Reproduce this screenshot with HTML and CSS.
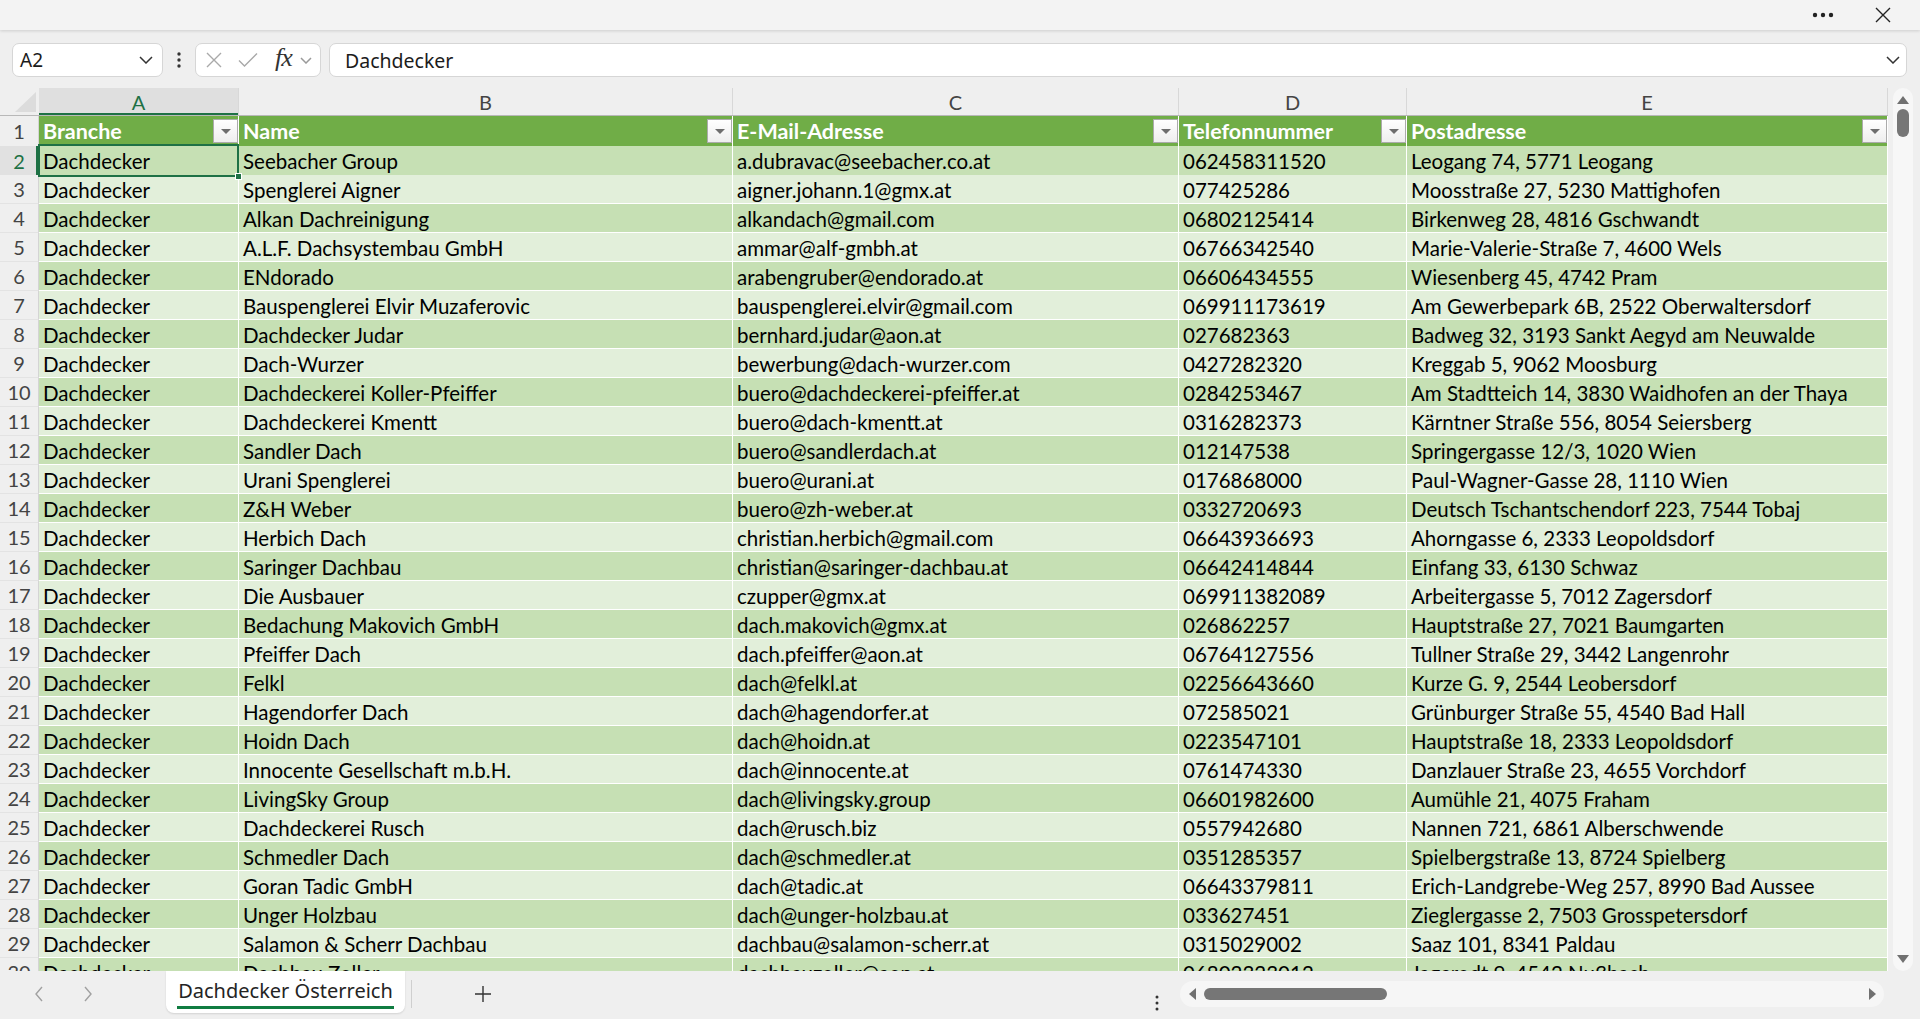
FILE: index.html
```html
<!DOCTYPE html>
<html lang="de">
<head>
  <meta charset="UTF-8">
  <title>Dachdecker Österreich</title>
  <link rel="stylesheet" href="styles.css">
</head>
<body>
  <div class="titlebar">
    <svg class="more" width="22" height="6" viewBox="0 0 22 6">
      <circle cx="3" cy="3" r="2.2"/><circle cx="11" cy="3" r="2.2"/><circle cx="19" cy="3" r="2.2"/>
    </svg>
    <svg class="close" width="16" height="16" viewBox="0 0 16 16">
      <path d="M1 1L15 15M15 1L1 15"/>
    </svg>
  </div>

  <div class="formula-row">
    <div class="namebox">
      <span>A2</span>
      <svg class="chev" width="14" height="8" viewBox="0 0 14 8"><path d="M1 1l6 6 6-6"/></svg>
    </div>
    <svg class="kebab" width="4" height="16" viewBox="0 0 4 16">
      <circle cx="2" cy="2" r="1.7"/><circle cx="2" cy="8" r="1.7"/><circle cx="2" cy="14" r="1.7"/>
    </svg>
    <div class="fx-tools">
      <svg class="tool cancel" width="16" height="16" viewBox="0 0 16 16"><path d="M1 1L15 15M15 1L1 15"/></svg>
      <svg class="tool enter" width="20" height="16" viewBox="0 0 20 16"><path d="M1 8.5l5.5 5.5L19 1.5"/></svg>
      <span class="fx">fx</span>
      <svg class="chev light" width="12" height="7" viewBox="0 0 12 7"><path d="M1 1l5 5 5-5"/></svg>
    </div>
    <div class="formula">
      <span>Dachdecker</span>
      <svg class="chev" width="14" height="8" viewBox="0 0 14 8"><path d="M1 1l6 6 6-6"/></svg>
    </div>
  </div>

  <div class="sheet">
    <div class="grid" id="grid">
      <div class="row col-heads">
        <div class="corner"><span></span></div>
        <div class="col-head current">A</div>
        <div class="col-head">B</div>
        <div class="col-head">C</div>
        <div class="col-head">D</div>
        <div class="col-head">E</div>
      </div>
      <div class="row table-head">
        <div class="row-num">1</div>
        <div class="cell th">Branche<span class="filter"></span></div>
        <div class="cell th">Name<span class="filter"></span></div>
        <div class="cell th">E-Mail-Adresse<span class="filter"></span></div>
        <div class="cell th">Telefonnummer<span class="filter"></span></div>
        <div class="cell th">Postadresse<span class="filter"></span></div>
      </div>
      <!-- data rows are added by the script below -->
    </div>

    <div class="vscroll">
      <span class="arrow up"></span>
      <span class="vthumb"></span>
      <span class="arrow down"></span>
    </div>
  </div>

  <div class="tabbar">
    <div class="tab-nav">
      <svg width="10" height="16" viewBox="0 0 10 16"><path d="M8 1L2 8l6 7"/></svg>
      <svg width="10" height="16" viewBox="0 0 10 16"><path d="M2 1l6 7-6 7"/></svg>
    </div>
    <div class="tab"><span>Dachdecker Österreich</span></div>
    <div class="tab-sep"></div>
    <svg class="add" width="18" height="18" viewBox="0 0 18 18"><path d="M9 1v16M1 9h16"/></svg>
    <svg class="kebab tabs-kebab" width="4" height="16" viewBox="0 0 4 16">
      <circle cx="2" cy="2" r="1.5"/><circle cx="2" cy="8" r="1.5"/><circle cx="2" cy="14" r="1.5"/>
    </svg>
    <div class="hscroll">
      <span class="arrow left"></span>
      <span class="hthumb"></span>
      <span class="arrow right"></span>
    </div>
  </div>

  <script>
    const rows = [
      ["Seebacher Group", "a.dubravac@seebacher.co.at", "062458311520", "Leogang 74, 5771 Leogang"],
      ["Spenglerei Aigner", "aigner.johann.1@gmx.at", "077425286", "Moosstraße 27, 5230 Mattighofen"],
      ["Alkan Dachreinigung", "alkandach@gmail.com", "06802125414", "Birkenweg 28, 4816 Gschwandt"],
      ["A.L.F. Dachsystembau GmbH", "ammar@alf-gmbh.at", "06766342540", "Marie-Valerie-Straße 7, 4600 Wels"],
      ["ENdorado", "arabengruber@endorado.at", "06606434555", "Wiesenberg 45, 4742 Pram"],
      ["Bauspenglerei Elvir Muzaferovic", "bauspenglerei.elvir@gmail.com", "069911173619", "Am Gewerbepark 6B, 2522 Oberwaltersdorf"],
      ["Dachdecker Judar", "bernhard.judar@aon.at", "027682363", "Badweg 32, 3193 Sankt Aegyd am Neuwalde"],
      ["Dach-Wurzer", "bewerbung@dach-wurzer.com", "0427282320", "Kreggab 5, 9062 Moosburg"],
      ["Dachdeckerei Koller-Pfeiffer", "buero@dachdeckerei-pfeiffer.at", "0284253467", "Am Stadtteich 14, 3830 Waidhofen an der Thaya"],
      ["Dachdeckerei Kmentt", "buero@dach-kmentt.at", "0316282373", "Kärntner Straße 556, 8054 Seiersberg"],
      ["Sandler Dach", "buero@sandlerdach.at", "012147538", "Springergasse 12/3, 1020 Wien"],
      ["Urani Spenglerei", "buero@urani.at", "0176868000", "Paul-Wagner-Gasse 28, 1110 Wien"],
      ["Z&H Weber", "buero@zh-weber.at", "0332720693", "Deutsch Tschantschendorf 223, 7544 Tobaj"],
      ["Herbich Dach", "christian.herbich@gmail.com", "06643936693", "Ahorngasse 6, 2333 Leopoldsdorf"],
      ["Saringer Dachbau", "christian@saringer-dachbau.at", "06642414844", "Einfang 33, 6130 Schwaz"],
      ["Die Ausbauer", "czupper@gmx.at", "069911382089", "Arbeitergasse 5, 7012 Zagersdorf"],
      ["Bedachung Makovich GmbH", "dach.makovich@gmx.at", "026862257", "Hauptstraße 27, 7021 Baumgarten"],
      ["Pfeiffer Dach", "dach.pfeiffer@aon.at", "06764127556", "Tullner Straße 29, 3442 Langenrohr"],
      ["Felkl", "dach@felkl.at", "02256643660", "Kurze G. 9, 2544 Leobersdorf"],
      ["Hagendorfer Dach", "dach@hagendorfer.at", "072585021", "Grünburger Straße 55, 4540 Bad Hall"],
      ["Hoidn Dach", "dach@hoidn.at", "0223547101", "Hauptstraße 18, 2333 Leopoldsdorf"],
      ["Innocente Gesellschaft m.b.H.", "dach@innocente.at", "0761474330", "Danzlauer Straße 23, 4655 Vorchdorf"],
      ["LivingSky Group", "dach@livingsky.group", "06601982600", "Aumühle 21, 4075 Fraham"],
      ["Dachdeckerei Rusch", "dach@rusch.biz", "0557942680", "Nannen 721, 6861 Alberschwende"],
      ["Schmedler Dach", "dach@schmedler.at", "0351285357", "Spielbergstraße 13, 8724 Spielberg"],
      ["Goran Tadic GmbH", "dach@tadic.at", "06643379811", "Erich-Landgrebe-Weg 257, 8990 Bad Aussee"],
      ["Unger Holzbau", "dach@unger-holzbau.at", "033627451", "Zieglergasse 2, 7503 Grosspetersdorf"],
      ["Salamon & Scherr Dachbau", "dachbau@salamon-scherr.at", "0315029002", "Saaz 101, 8341 Paldau"],
      ["Dachbau Zoller", "dachbauzoller@aon.at", "06802323012", "Jagerodt 9, 4542 Nußbach"]
    ];

    const grid = document.getElementById('grid');

    rows.forEach((r, i) => {
      const rowNo = i + 2;
      const row = document.createElement('div');
      row.className = 'row data ' + (i % 2 === 0 ? 'band-dark' : 'band-light');

      const num = document.createElement('div');
      num.className = 'row-num' + (rowNo === 2 ? ' current' : '');
      num.textContent = rowNo;
      row.appendChild(num);

      ['Dachdecker', ...r].forEach((text, c) => {
        const cell = document.createElement('div');
        cell.className = 'cell' + (rowNo === 2 && c === 0 ? ' active' : '');
        cell.textContent = text;
        row.appendChild(cell);
      });

      grid.appendChild(row);
    });
  </script>
</body>
</html>
```

FILE: styles.css
```css
body {
  margin: 0;
  height: 1019px;
  overflow: hidden;
  background: #efefef;
  font-family: "Noto Sans", sans-serif;
  display: flex;
  flex-direction: column;
}

svg path {
  fill: none;
}

/* top strip */
.titlebar {
  height: 30px;
  flex: none;
  background: #f3f3f3;
  box-shadow: 0 1px 3px rgba(0, 0, 0, 0.14);
  display: flex;
  align-items: center;
  justify-content: flex-end;
  padding-right: 29px;
  gap: 41px;
  position: relative;
  z-index: 1;
}

.more circle {
  fill: #222;
}

.close path {
  stroke: #222;
  stroke-width: 1.4;
}

/* name box + formula bar */
.formula-row {
  height: 58px;
  flex: none;
  box-sizing: border-box;
  padding: 13px 13px 11px 12px;
  display: flex;
  align-items: stretch;
}

.namebox,
.fx-tools,
.formula {
  background: #fff;
  border: 1px solid #d6d6d6;
  border-radius: 7px;
  display: flex;
  align-items: center;
  box-sizing: border-box;
}

.namebox {
  width: 151px;
  padding: 0 9px 0 7px;
  justify-content: space-between;
  font-size: 19px;
  color: #1b1b1b;
}

.chev path {
  stroke: #333;
  stroke-width: 1.5;
}

.chev.light path {
  stroke: #9a9a9a;
}

.kebab {
  align-self: center;
  margin: 0 14px 0 14px;
}

.kebab circle {
  fill: #333;
}

.fx-tools {
  width: 126px;
  padding: 0 0 0 10px;
}

.tool path {
  stroke: #a9a9a9;
  stroke-width: 1.4;
}

.enter {
  margin-left: 16px;
}

.fx {
  font-family: "Liberation Serif", serif;
  font-style: italic;
  font-size: 26px;
  color: #333;
  margin: -4px 0 0 17px;
  letter-spacing: -1px;
}

.chev.light {
  margin-left: 8px;
}

.formula {
  flex: 1;
  margin-left: 8px;
  padding: 0 6px 0 15px;
  justify-content: space-between;
  font-size: 19.5px;
  color: #1b1b1b;
}

/* sheet grid */
.sheet {
  height: 883px;
  flex: none;
  display: flex;
}

.grid {
  width: 1888px;
  height: 883px;
  overflow: hidden;
  font-family: Lato, sans-serif;
}

.row {
  display: grid;
  grid-template-columns: 39px 200px 494px 446px 228px 481px;
  height: 29px;
}

.col-heads {
  height: 28px;
  border-bottom: 1px solid #b8b8b8;
  box-sizing: border-box;
}

.corner {
  position: relative;
}

.corner span {
  position: absolute;
  right: 3px;
  bottom: 3px;
  width: 0;
  height: 0;
  border-left: 21px solid transparent;
  border-bottom: 20px solid #dcdcdc;
}

.col-head {
  border-right: 1px solid #d8d8d8;
  display: flex;
  align-items: center;
  justify-content: center;
  font-size: 20px;
  color: #444;
}

.col-head.current {
  background: #dfdfdf;
  color: #1e7145;
  box-shadow: inset 0 -2px 0 #1e7145;
}

.row-num {
  display: flex;
  align-items: center;
  justify-content: center;
  font-size: 20px;
  color: #444;
  background: #efefef;
  border-bottom: 1px solid #e3e3e3;
  border-right: 1px solid #d4d4d4;
}

.row-num.current {
  background: #e1e1e1;
  color: #1e7145;
  box-shadow: inset -2px 0 0 #1e7145;
}

.cell {
  white-space: nowrap;
  overflow: hidden;
  padding: 0 4px;
  font-size: 20.5px;
  line-height: 30px;
  color: #000;
  border-right: 1px solid #fff;
  border-bottom: 1px solid #fff;
}

.table-head {
  height: 30px;
}

.table-head .row-num {
  border-bottom-width: 2px;
}

.cell.th {
  background: #70ad47;
  color: #fff;
  font-size: 21.5px;
  font-weight: bold;
  border-bottom-width: 2px;
  display: flex;
  align-items: center;
  padding-right: 0;
  overflow: visible;
}

.filter {
  margin-left: auto;
  width: 25px;
  height: 24px;
  box-sizing: border-box;
  border: 1px solid #ababab;
  background: linear-gradient(#ffffff, #eeeeee);
  display: flex;
  align-items: center;
  justify-content: center;
}

.filter::before {
  content: "";
  border-left: 5px solid transparent;
  border-right: 5px solid transparent;
  border-top: 5px solid #6e6e6e;
}

.band-dark .cell {
  background: #c6e0b4;
}

.band-light .cell {
  background: #e2efda;
}

.cell.active {
  position: relative;
  overflow: visible;
}

.cell.active::after {
  content: "";
  position: absolute;
  top: -2px;
  left: -1px;
  right: -1px;
  bottom: -1px;
  border: 2px solid #1e7145;
}

.cell.active::before {
  content: "";
  position: absolute;
  right: -4px;
  bottom: -4px;
  width: 5px;
  height: 5px;
  background: #1e7145;
  border: 1px solid #fff;
  z-index: 1;
}

/* vertical scrollbar */
.vscroll {
  width: 20px;
  margin-left: 5px;
  background: #f7f7f7;
  border-radius: 10px;
  display: flex;
  flex-direction: column;
  align-items: center;
  padding: 8px 0;
  box-sizing: border-box;
}

.arrow {
  width: 0;
  height: 0;
}

.arrow.up {
  border-left: 6px solid transparent;
  border-right: 6px solid transparent;
  border-bottom: 8px solid #707070;
}

.arrow.down {
  margin-top: auto;
  border-left: 6px solid transparent;
  border-right: 6px solid transparent;
  border-top: 8px solid #707070;
}

.vthumb {
  margin-top: 5px;
  width: 12px;
  height: 28px;
  border-radius: 6px;
  background: #767676;
}

/* sheet tabs + horizontal scrollbar */
.tabbar {
  height: 48px;
  flex: none;
  display: flex;
  align-items: flex-start;
}

.tab-nav {
  display: flex;
  gap: 39px;
  padding: 15px 0 0 34px;
  width: 166px;
  box-sizing: border-box;
}

.tab-nav path {
  stroke: #a0a0a0;
  stroke-width: 1.4;
}

.tab {
  width: 239px;
  height: 42px;
  background: #fff;
  border-radius: 0 0 8px 8px;
  box-shadow: 0 1px 2px rgba(0, 0, 0, 0.12);
  display: flex;
  justify-content: center;
}

.tab span {
  font-size: 20px;
  color: #242424;
  line-height: 30px;
  height: 30px;
  padding: 5px 1px 0;
  border-bottom: 3px solid #107c41;
}

.tab-sep {
  width: 1px;
  height: 28px;
  background: #cfcfcf;
  margin: 9px 0 0 6px;
}

.add {
  margin: 14px 0 0 62px;
}

.add path {
  stroke: #333;
  stroke-width: 1.4;
}

.tabs-kebab {
  margin: 16px 0 0 663px;
}

.hscroll {
  margin: 10px 0 0 21px;
  width: 704px;
  height: 26px;
  background: #f6f6f6;
  border-radius: 13px;
  display: flex;
  align-items: center;
  padding: 0 8px 0 9px;
  box-sizing: border-box;
}

.arrow.left {
  border-top: 6px solid transparent;
  border-bottom: 6px solid transparent;
  border-right: 7px solid #707070;
}

.arrow.right {
  margin-left: auto;
  border-top: 6px solid transparent;
  border-bottom: 6px solid transparent;
  border-left: 7px solid #707070;
}

.hthumb {
  margin-left: 8px;
  width: 183px;
  height: 12px;
  border-radius: 6px;
  background: #767676;
}
```
